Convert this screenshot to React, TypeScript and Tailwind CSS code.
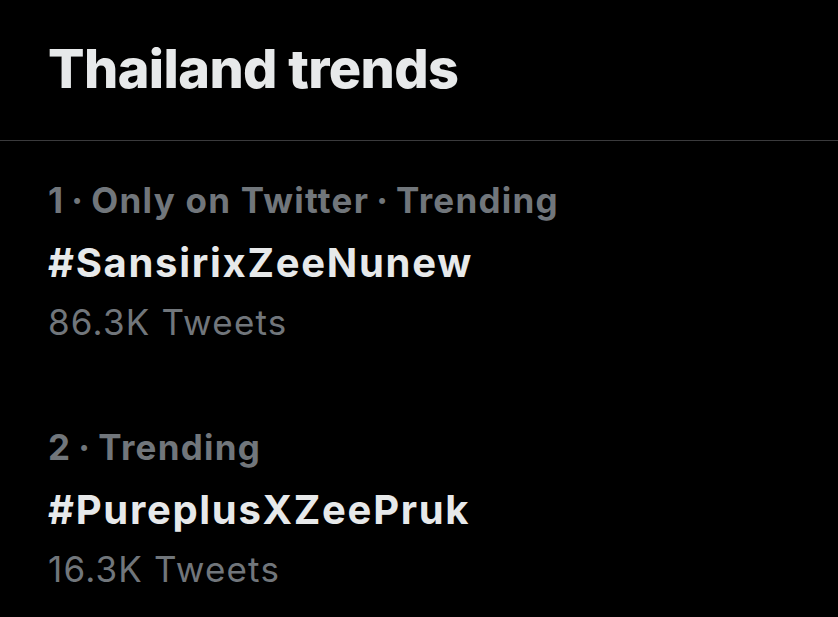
import React from "react";

const trends = [
  { meta: ["1", "Only on Twitter", "Trending"], tag: "#SansirixZeeNunew", count: "86.3K Tweets" },
  { meta: ["2", "Trending"], tag: "#PureplusXZeePruk", count: "16.3K Tweets" },
];

export default function App() {
  return (
    <div
      className="w-[838px] h-[617px] bg-black overflow-hidden"
      style={{ fontFamily: "Inter, 'Noto Sans', sans-serif" }}
    >
      <div className="pl-[48px] pt-[42px] pb-[44px]">
        <h1 className="text-[54px] leading-[54px] font-extrabold text-[#e7e9ea] tracking-[-0.6px]">
          Thailand trends
        </h1>
      </div>
      <div className="h-px bg-[#3a3a3c]" />
      <div className="pl-[48px] pt-[39px] flex flex-col gap-[85px]">
        {trends.map((t) => (
          <div key={t.tag} className="flex flex-col">
            <div className="text-[35px] leading-[40px] font-bold text-[#71767b] tracking-[1.25px] whitespace-nowrap">
              {t.meta.map((m, i) => (
                <React.Fragment key={m}>
                  {i > 0 && <span className="mx-[7px]">·</span>}
                  <span>{m}</span>
                </React.Fragment>
              ))}
            </div>
            <div className="mt-[23px] text-[40px] leading-[40px] font-bold text-[#e7e9ea] tracking-[1.7px]">{t.tag}</div>
            <div className="mt-[19px] text-[35px] leading-[40px] font-normal text-[#71767b] tracking-[1.2px]">{t.count}</div>
          </div>
        ))}
      </div>
    </div>
  );
}
